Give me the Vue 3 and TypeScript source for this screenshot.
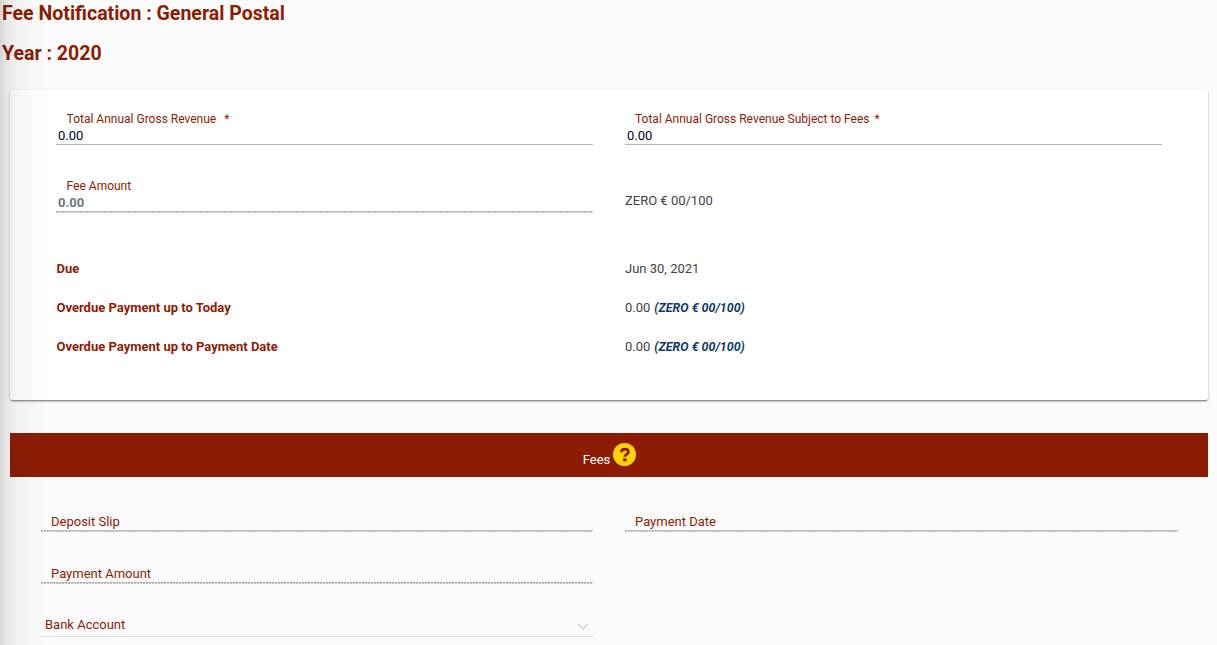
<script setup lang="ts">
const dues = [
  { label: 'Due', value: 'Jun 30, 2021', note: '' },
  { label: 'Overdue Payment up to Today', value: '0.00', note: '(ZERO € 00/100)' },
  { label: 'Overdue Payment up to Payment Date', value: '0.00', note: '(ZERO € 00/100)' },
]
</script>

<template>
  <div class="page">
    <div class="side-shadow"></div>
    <h2 class="title first">Fee Notification : General Postal</h2>
    <h2 class="title second">Year : 2020</h2>

    <section class="card">
      <div class="row inputs">
        <div class="field">
          <label class="label">Total Annual Gross Revenue <span class="star">*</span></label>
          <div class="value">0.00</div>
        </div>
        <div class="field">
          <label class="label narrow">Total Annual Gross Revenue Subject to Fees <span class="star tight">*</span></label>
          <div class="value">0.00</div>
        </div>
      </div>
      <div class="row inputs second-input">
        <div class="field disabled">
          <label class="label">Fee Amount</label>
          <div class="value">0.00</div>
        </div>
        <div class="words">ZERO € 00/100</div>
      </div>
      <div class="dues">
        <div v-for="d in dues" :key="d.label" class="row due">
          <div class="due-label">{{ d.label }}</div>
          <div class="due-value">{{ d.value }}<em v-if="d.note">{{ d.note }}</em></div>
        </div>
      </div>
    </section>

    <div class="banner">
      <span>Fees</span>
      <svg class="help" viewBox="0 0 24 24" width="23" height="23" aria-hidden="true">
        <circle cx="12" cy="12" r="12" fill="#ffd400" />
        <path d="M8.800 9.600C8.800 7.500 10.200 6.400 12.400 6.400c2.200 0 3.600 1.200 3.600 2.900 0 2.600-3.700 2.500-3.700 5" fill="none" stroke="#8c1d04" stroke-width="3" />
        <rect x="10.600" y="16" width="3.400" height="3.200" fill="#8c1d04" />
      </svg>
    </div>

    <div class="form">
      <div class="form-row">
        <div class="plain-field left"><span>Deposit Slip</span></div>
        <div class="plain-field right"><span>Payment Date</span></div>
      </div>
      <div class="form-row">
        <div class="plain-field left"><span>Payment Amount</span></div>
      </div>
      <div class="form-row">
        <div class="select left">
          <span>Bank Account</span>
          <svg viewBox="0 0 12 7" width="12" height="7" aria-hidden="true">
            <path d="M1 1l5 5 5-5" fill="none" stroke="#cfcfcf" stroke-width="1.200" />
          </svg>
        </div>
      </div>
    </div>
  </div>
</template>

<style>
html, body { margin: 0; background: #fbfbfb; overflow: hidden; }
</style>

<style scoped>
.page {
  position: relative;
  height: 645px;
  overflow: hidden;
  background: #fbfbfb;
  font-family: Roboto, "Liberation Sans", sans-serif;
  font-size: 13px;
  color: #424242;
}
.side-shadow {
  position: absolute;
  left: 0;
  top: 0;
  bottom: 0;
  width: 48px;
  pointer-events: none;
  z-index: 2;
  background: linear-gradient(to right, rgba(0,0,0,.15), rgba(0,0,0,.07) 8px, rgba(0,0,0,.035) 18px, rgba(0,0,0,0));
}
.title {
  margin: 0;
  padding-left: 2px;
  color: #8c1d04;
  font-size: 19.550px;
  font-weight: 700;
  line-height: 24px;
}
.first { padding-top: 2px; }
.second { margin-top: 16px; }
.card {
  margin: 24px 9px 0 10px;
  height: 310px;
  box-sizing: border-box;
  padding-top: 21px;
  background: #fff;
  border-radius: 2px;
  box-shadow: 0 2px 2px -1px rgba(0,0,0,.4), 0 1px 3px rgba(0,0,0,.25);
}
.row {
  display: grid;
  grid-template-columns: 537px 537px;
  column-gap: 32px;
  padding-left: 46px;
}
.field { height: 33px; border-bottom: 1px solid #b5b5b5; }
.field.disabled {
  height: 33px;
  padding-bottom: 2px;
  border-bottom: 0;
  background:
    repeating-linear-gradient(to right, #bbb 0 2px, transparent 2px 3px) left bottom / 100% 1px no-repeat,
    linear-gradient(#bbb, #bbb) left bottom 1px / 100% 1px no-repeat;
}
.label {
  display: block;
  padding-left: 10.600px;
  font-size: 12px;
  line-height: 16px;
  color: #8c1d04;
}
.label.narrow { padding-left: 10px; }
.star { margin-left: 5px; }
.star.tight { margin-left: 2px; }
.value {
  padding-left: 2px;
  font-size: 13px;
  line-height: 17px;
  color: #00001e;
}
.disabled .value { color: #6f7780; font-weight: 700; }
.second-input { margin-top: 33px; }
.words { padding-top: 15px; font-size: 13px; line-height: 16px; color: #424242; }
.dues { margin-top: 47px; }
.due { height: 39px; align-items: start; line-height: 17px; }
.due-label { color: #8c1d04; font-weight: 700; font-size: 13px; padding-left: .500px; }
.due-value { font-size: 13px; color: #424242; }
.due-value em { margin-left: 4px; color: #0d3c66; font-weight: 700; font-size: 12.400px; }
.banner {
  margin: 33px 9px 0 10px;
  height: 44px;
  padding-left: 1px;
  background: #8c1d04;
  color: #fff;
  display: flex;
  justify-content: center;
  align-items: center;
  gap: 3px;
  font-size: 13px;
}
.banner span { padding-top: 10px; line-height: 16px; }
.help { margin-top: -1px; }
.form { padding-top: 36px; }
.form-row {
  display: grid;
  grid-template-columns: 552px 553px;
  column-gap: 32px;
  padding-left: 41px;
  height: 52px;
  align-items: start;
}
.plain-field {
  height: 17px;
  padding: 0 0 2px 10px;
  color: #8c1d04;
  font-size: 13px;
  line-height: 17px;
  background:
    repeating-linear-gradient(to right, #bbb 0 2px, transparent 2px 3px) left bottom / 100% 1px no-repeat,
    linear-gradient(#bbb, #bbb) left bottom 1px / 100% 1px no-repeat;
}
.select {
  height: 18px;
  margin-top: -1px;
  padding: 0 4px 2px 4px;
  border-bottom: 1px solid #e2e2e2;
  color: #8c1d04;
  font-size: 13px;
  line-height: 18px;
  display: flex;
  justify-content: space-between;
  align-items: center;
}
.select svg { margin-top: 2px; }
</style>
